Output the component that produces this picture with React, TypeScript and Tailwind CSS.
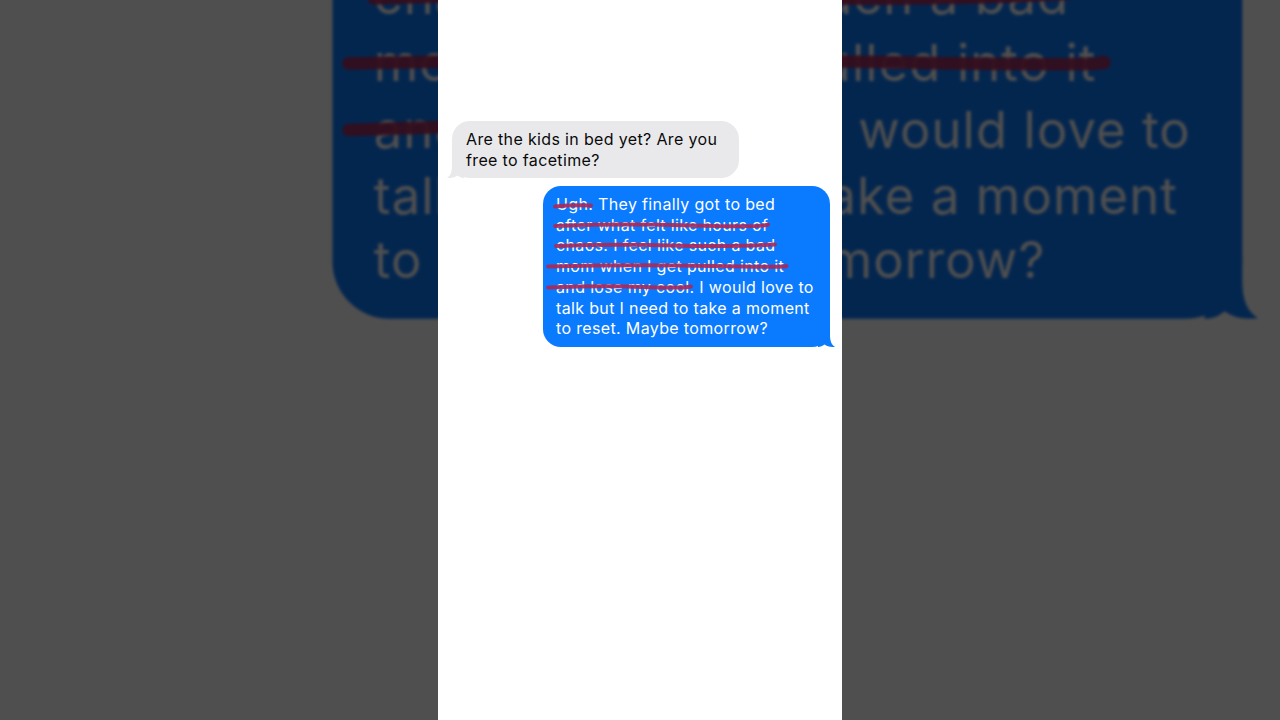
import React from "react";

const font = { fontFamily: '"Inter", "Noto Sans", "Liberation Sans", sans-serif' };

function Tail({ side, color }: { side: "left" | "right"; color: string }) {
  const isRight = side === "right";
  return (
    <svg
      className={
        isRight
          ? "absolute bottom-0 right-[-5px] w-[17px] h-[20px]"
          : "absolute bottom-0 left-[-5px] w-[17px] h-[20px] -scale-x-100"
      }
      viewBox="0 0 17 20"
      aria-hidden
    >
      <path
        d="M0 0 L12 0 L12 8 C12 14 13.5 17.8 17 19.8 C13 20.4 9 19.6 6.5 17.6 C4.5 19.2 2.5 20 0 20 Z"
        fill={color}
      />
    </svg>
  );
}

function Strikes() {
  const c = "#a92a5a";
  return (
    <svg
      className="absolute inset-0 w-full h-full pointer-events-none"
      viewBox="0 0 287 161"
      aria-hidden
    >
      <g stroke={c} strokeWidth="4" strokeLinecap="round" fill="none" opacity="0.92">
        <path d="M12 20.5 Q30 18.5 48 19.5" />
        <path d="M12 40 Q80 37.5 150 39.5 T225 38.5" />
        <path d="M13 60 Q70 58 130 59.5 T232 58.5" />
        <path d="M5 80.5 Q90 78.5 170 80 T243 80" />
        <path d="M5 101.5 Q60 99.5 100 101 T148 100.5" />
      </g>
    </svg>
  );
}

function Frame() {
  return (
    <div
      className="w-[404px] h-[720px] bg-white flex flex-col pt-[121px] text-[16px] tracking-[0.35px]"
      style={font}
    >
      <div className="self-start ml-[14px] relative">
        <Tail side="left" color="#e9e9eb" />
        <div className="relative w-[287px] rounded-[18px] bg-[#e9e9eb] pl-[14px] pr-[10px] py-[7.5px] leading-[21px] text-[#0a0a0a] whitespace-nowrap">
          <div>Are the kids in bed yet? Are you</div>
          <div>free to facetime?</div>
        </div>
      </div>
      <div className="self-end mr-[12px] mt-[8px] relative">
        <Tail side="right" color="#0a7aff" />
        <div className="relative w-[287px] rounded-[18px] bg-[#0a7aff] pl-[13px] pr-[8px] py-[8px] leading-[20.7px] text-white whitespace-nowrap">
          <div>Ugh. They finally got to bed</div>
          <div>after what felt like hours of</div>
          <div>chaos. I feel like such a bad</div>
          <div>mom when I get pulled into it</div>
          <div>and lose my cool. I would love to</div>
          <div>talk but I need to take a moment</div>
          <div>to reset. Maybe tomorrow?</div>
          <Strikes />
        </div>
      </div>
    </div>
  );
}

export default function App() {
  return (
    <div className="relative w-[1280px] h-[720px] overflow-hidden bg-[#4f4f4f]">
      <div
        className="absolute inset-0 flex items-center justify-center brightness-[0.31] blur-[1.5px]"
        aria-hidden
      >
        <div className="shrink-0 scale-[3.17]">
          <Frame />
        </div>
      </div>
      <div className="relative flex justify-center">
        <Frame />
      </div>
    </div>
  );
}
